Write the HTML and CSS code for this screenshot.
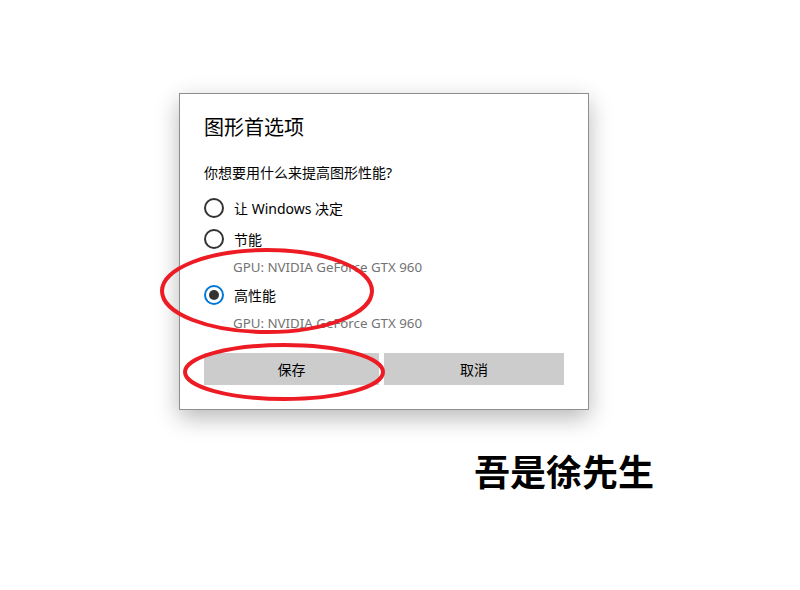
FILE: index.html
```html
<!DOCTYPE html>
<html lang="zh-CN">
<head>
    <meta charset="UTF-8">
    <meta name="viewport" content="width=device-width, initial-scale=1.0">
    <title>图形首选项</title>
    <link rel="stylesheet" href="styles.css">
</head>
<body>
    <div class="page">
        <div class="dialog">
            <h1 class="title">图形首选项</h1>
            <p class="question">你想要用什么来提高图形性能?</p>

            <label class="option">
                <span class="radio"></span>
                <span class="option-text">让 Windows 决定</span>
            </label>

            <label class="option">
                <span class="radio"></span>
                <span class="option-text">节能</span>
            </label>
            <div class="gpu">GPU: NVIDIA GeForce GTX 960</div>

            <label class="option">
                <span class="radio checked"></span>
                <span class="option-text">高性能</span>
            </label>
            <div class="gpu">GPU: NVIDIA GeForce GTX 960</div>

            <div class="buttons">
                <button type="button" class="btn">保存</button>
                <button type="button" class="btn">取消</button>
            </div>
        </div>

        <div class="watermark">吾是徐先生</div>

        <!-- 红色圈注 -->
        <svg class="marks" width="800" height="590" viewBox="0 0 800 590">
            <ellipse cx="267" cy="291" rx="105" ry="41" fill="none" stroke="#ed1c24" stroke-width="4"/>
            <ellipse cx="284" cy="372" rx="99" ry="27" fill="none" stroke="#ed1c24" stroke-width="4"/>
        </svg>
    </div>
</body>
</html>
```

FILE: styles.css
```css
* {
    box-sizing: border-box;
    margin: 0;
    padding: 0;
}

body {
    background-color: #ffffff;
    font-family: "Segoe UI", "Noto Sans", "Noto Sans CJK SC", sans-serif;
    color: #000000;
}

.page {
    position: relative;
    width: 800px;
    height: 590px;
    padding: 93px 0 0 179px;
    overflow: hidden;
}

.dialog {
    width: 410px;
    background-color: #ffffff;
    border: 1px solid #8e8e8e;
    box-shadow: 0 8px 22px rgba(0, 0, 0, 0.28);
    padding: 20px 24px 24px 24px;
}

.title {
    font-size: 20px;
    font-weight: normal;
    line-height: 28px;
    margin-bottom: 21px;
}

.question {
    font-size: 14px;
    line-height: 20px;
    margin-bottom: 15px;
}

.option {
    display: flex;
    align-items: center;
    gap: 10px;
    height: 20px;
    margin-bottom: 11px;
    font-size: 14px;
}

.radio {
    width: 20px;
    height: 20px;
    border: 2px solid #333333;
    border-radius: 50%;
    display: flex;
    align-items: center;
    justify-content: center;
    flex-shrink: 0;
}

.radio.checked {
    border-color: #0078d7;
}

.radio.checked::after {
    content: "";
    width: 10px;
    height: 10px;
    border-radius: 50%;
    background-color: #333333;
}

.gpu {
    font-size: 13.3px;
    line-height: 18px;
    color: #737373;
    margin: -2px 0 9px 29px;
}

.gpu:last-of-type {
    margin-bottom: 0;
}

.buttons {
    display: grid;
    grid-template-columns: 175px 1fr;
    gap: 5px;
    margin-top: 21px;
}

.btn {
    height: 32px;
    border: none;
    background-color: #cccccc;
    font-family: inherit;
    font-size: 14px;
    color: #000000;
}

.watermark {
    margin: 36px 0 0 295px;
    font-size: 36px;
    font-weight: bold;
    line-height: 48px;
    font-family: "Noto Sans CJK SC", sans-serif;
}

.marks {
    position: absolute;
    top: 0;
    left: 0;
}
```
